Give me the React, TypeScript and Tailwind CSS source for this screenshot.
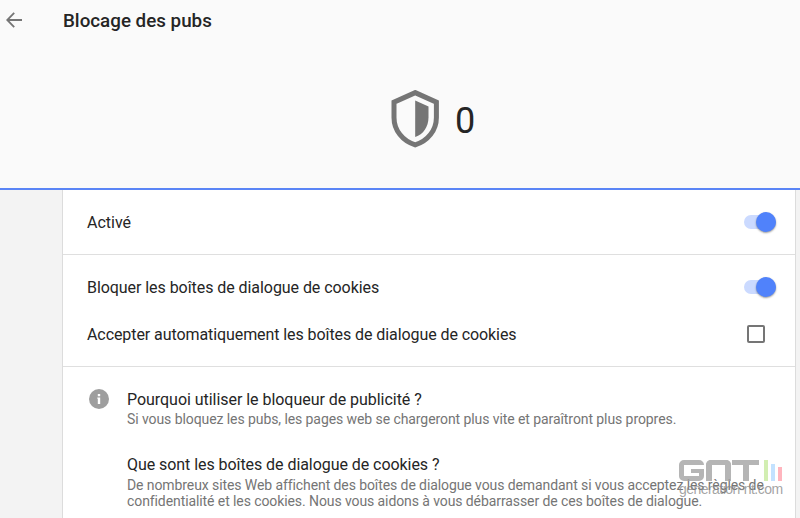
import { useState } from "react";

function ShieldIcon() {
  return (
    <svg width="48" height="58" viewBox="0 0 48 58" fill="none">
      <path
        d="M24.2 2.6 45.4 12.1V27.4C45.4 40.2 36.7 51.2 24.2 54.8 11.7 51.2 3 40.2 3 27.4V12.1Z"
        stroke="#757575"
        strokeWidth="5"
      />
      <path d="M24.2 10.6 37.5 16.6V27.2C37.5 36.7 32.2 44.5 24.2 46.9Z" fill="#757575" />
    </svg>
  );
}

function Toggle({ label, on, onChange }: { label: string; on: boolean; onChange: (on: boolean) => void }) {
  return (
    <button
      role="switch"
      aria-label={label}
      aria-checked={on}
      onClick={() => onChange(!on)}
      className={`flex h-5 w-8 items-center ${on ? "justify-end" : "justify-start"}`}
    >
      <span className={`-mr-5 h-3.5 w-8 rounded-full ${on ? "bg-[#cbdaff]" : "bg-gray-300"}`} />
      <span
        className={`size-5 shrink-0 rounded-full shadow-[0_1px_2px_rgba(0,0,0,0.4)] ${on ? "bg-[#5082fb]" : "bg-white"}`}
      />
    </button>
  );
}

function Watermark() {
  return (
    <div className="absolute left-[679px] top-[460px] h-[38px] w-[105px]">
      <div className="flex h-[21px] items-end opacity-80">
        <div className="relative mr-[2px] h-[21px] w-[25px] rounded-[5px] border-[5px] border-[#a3a3a3]">
          <div className="absolute -right-[5px] top-0 h-[4px] w-[5px] bg-white" />
          <div className="absolute right-0 top-[4px] h-[4px] w-[8px] bg-[#a3a3a3]" />
        </div>
        <div className="mr-[1px] h-[21px] w-[25px] rounded-t-[5px] border-x-[6px] border-t-[5px] border-[#a3a3a3]" />
        <div className="mr-[5px] flex h-[21px] w-[27px] flex-col items-center">
          <div className="h-[5px] w-full bg-[#a3a3a3]" />
          <div className="w-[6px] flex-1 bg-[#a3a3a3]" />
        </div>
        <div className="mr-[3px] h-[21px] w-[4px] bg-[#c8ea9f]" />
        <div className="mr-[3px] h-[17px] w-[4px] bg-[#b5dcff]" />
        <div className="h-[14px] w-[4px] bg-[#ffa3ae]" />
      </div>
      <p className="mt-[1px] whitespace-nowrap font-['Liberation_Sans',sans-serif] text-[14px] leading-[14px] tracking-[-0.55px] text-[#8c8c8c]/80">
        generation-nt.com
      </p>
    </div>
  );
}

export default function App() {
  const [enabled, setEnabled] = useState(true);
  const [blockCookies, setBlockCookies] = useState(true);
  const [autoAccept, setAutoAccept] = useState(false);

  return (
    <div className="relative flex h-[518px] w-[800px] flex-col overflow-hidden bg-[#f3f3f3] font-[Roboto,sans-serif] text-[#252525]">
      <header className="flex h-[190px] shrink-0 flex-col border-b-2 border-[#5a85f6] bg-[#fafafa]">
        <div className="flex h-10 items-center pl-[6px]">
          <svg width="16" height="16" viewBox="0 0 16 16" fill="none" stroke="#757575" strokeWidth="1.8">
            <path d="M16 8H1.5M8.2 0.8 1.2 8 8.2 15.2" />
          </svg>
          <h1 className="ml-[41px] mt-[2px] text-[18.8px] font-medium leading-6">Blocage des pubs</h1>
        </div>
        <div className="mt-[50px] flex h-[58px] items-center pl-[391px]">
          <ShieldIcon />
          <span className="ml-4 mt-[3px] text-[36px] leading-10">0</span>
        </div>
      </header>

      <main className="ml-[62px] mr-1 flex-1 border-x border-[#dcdcdc] bg-white">
        <div className="flex h-[65px] items-center justify-between border-b border-[#dfdfdf] pl-6 pr-[19px]">
          <span className="mt-[2px] text-[16px]">Activé</span>
          <Toggle label="Activé" on={enabled} onChange={setEnabled} />
        </div>

        <div className="h-[112px] border-b border-[#dfdfdf] pl-6 pr-[19px] pt-2">
          <div className="flex h-12 items-center justify-between">
            <span className="mt-[2px] text-[16px] tracking-[-0.06px]">Bloquer les boîtes de dialogue de cookies</span>
            <Toggle label="Bloquer les boîtes de dialogue de cookies" on={blockCookies} onChange={setBlockCookies} />
          </div>
          <div className="flex h-12 items-center justify-between">
            <span className="text-[16px] tracking-[-0.08px]">
              Accepter automatiquement les boîtes de dialogue de cookies
            </span>
            <button
              role="checkbox"
              aria-checked={autoAccept}
              onClick={() => setAutoAccept(!autoAccept)}
              className={`mb-[2px] mr-[11px] size-[18px] rounded-[2px] border-2 border-[#757575] ${autoAccept ? "bg-[#5082fb]" : ""}`}
            />
          </div>
        </div>

        <div className="flex pl-[26px] pt-[21px]">
          <svg width="20" height="20" viewBox="0 0 20 20" className="mt-[1px] shrink-0">
            <circle cx="10" cy="10" r="10" fill="#9e9e9e" />
            <path d="M8.8 5h2.4v2.2H8.8zM8.3 8.6h2.9V15H8.8V9.8H8.3z" fill="#fff" />
          </svg>
          <div className="ml-[18px] whitespace-nowrap">
            <h2 className="text-[16px] leading-6 tracking-[-0.04px]">Pourquoi utiliser le bloqueur de publicité ?</h2>
            <p className="-mt-px text-[14px] leading-4 tracking-[-0.08px] text-[#757575]">
              Si vous bloquez les pubs, les pages web se chargeront plus vite et paraîtront plus propres.
            </p>
            <h2 className="mt-[26px] text-[16px] leading-6 tracking-[-0.06px]">
              Que sont les boîtes de dialogue de cookies ?
            </h2>
            <p className="text-[14px] leading-4 tracking-[-0.09px] text-[#757575]">
              De nombreux sites Web affichent des boîtes de dialogue vous demandant si vous acceptez les règles de
              <br />
              confidentialité et les cookies. Nous vous aidons à vous débarrasser de ces boîtes de dialogue.
            </p>
          </div>
        </div>
      </main>

      <Watermark />
    </div>
  );
}
